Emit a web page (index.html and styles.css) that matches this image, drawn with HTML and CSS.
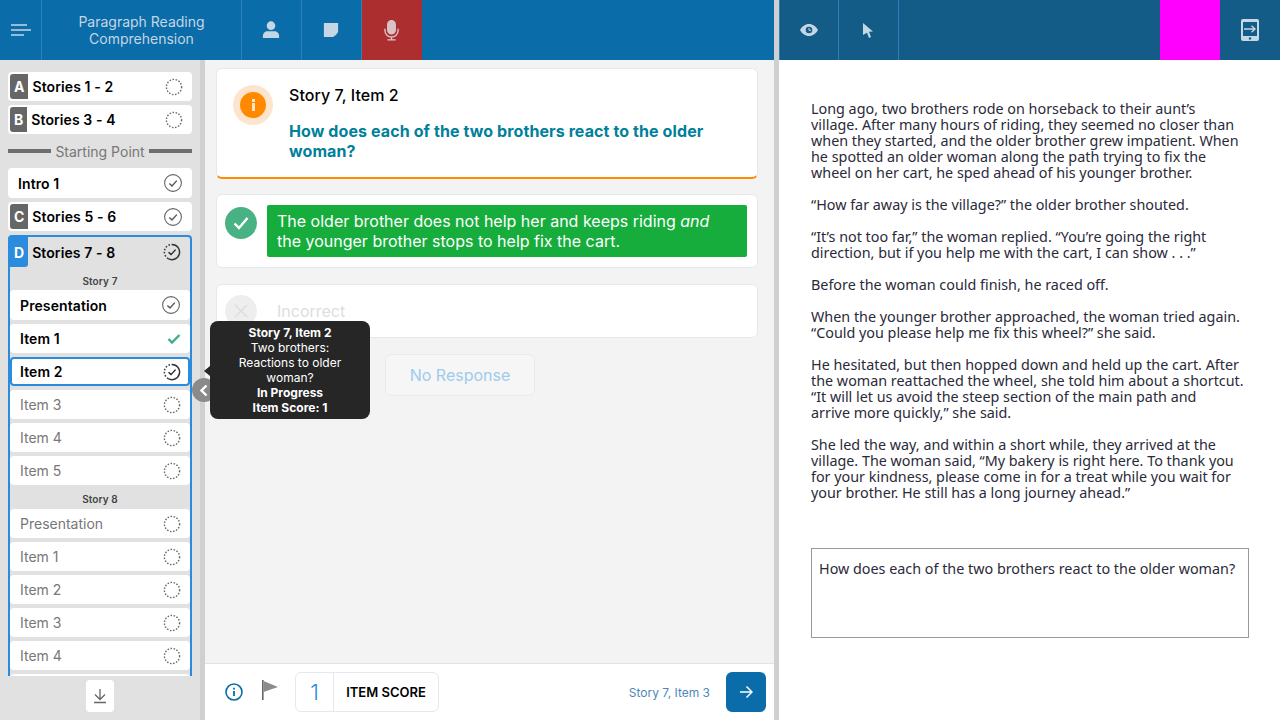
FILE: index.html
```html
<!DOCTYPE html>
<html lang="en">
  <head>
    <meta charset="UTF-8" />
    <title>Paragraph Reading Comprehension</title>
    <link rel="stylesheet" href="styles.css">
  </head>
  <body>
    <svg class="defs" width="0" height="0">
      <symbol id="todo" viewBox="0 0 20 20"><circle cx="10" cy="10" r="7.6" fill="none" stroke="#666" stroke-width="1.400" stroke-dasharray="1.500 1.600"/></symbol>
      <symbol id="done" viewBox="0 0 20 20"><circle cx="10" cy="10" r="8.400" fill="none" stroke="#666" stroke-width="1.100"/><path d="M6.400 10.400l2.600 2.600 4.800-5.400" fill="none" stroke="#555" stroke-width="1.400"/></symbol>
      <symbol id="progress" viewBox="0 0 20 20"><path d="M10 2.400A7.600 7.600 0 1 1 6.200 16.600" fill="none" stroke="#333" stroke-width="1.500"/><path d="M6.200 16.600A7.600 7.600 0 0 1 10 2.400" fill="none" stroke="#333" stroke-width="1.500" stroke-dasharray="1.500 1.700"/><path d="M6.600 10.200l2.400 2.400 4.600-5" fill="none" stroke="#222" stroke-width="1.400"/></symbol>
    </svg>

    <div class="app">
      <section class="left">
        <header class="topbar">
          <div class="cell cell-menu">
            <svg width="22" height="14" viewBox="0 0 22 14"><path d="M1 2h16M1 7h20M1 12h13" stroke="#c5d6e4" stroke-width="1.600"/></svg>
          </div>
          <div class="cell cell-title">Paragraph Reading<br>Comprehension</div>
          <div class="cell cell-icon">
            <svg width="18" height="18" viewBox="0 0 20 20" fill="#c5d6e4"><circle cx="10" cy="5.200" r="4.800"/><path d="M1 19v-2.600c0-3 2.600-5 5-5h8c2.400 0 5 2 5 5V19z"/></svg>
          </div>
          <div class="cell cell-icon">
            <svg width="16" height="16" viewBox="0 0 18 18"><path d="M1 1h16v10.500L11.500 17H1z" fill="#c5d6e4"/><path d="M13 13h3l-3 3z" fill="#c5d6e4"/></svg>
          </div>
          <div class="cell cell-icon cell-mic">
            <svg width="15" height="21" viewBox="0 0 16 22" fill="none" stroke="#d9c3c6" stroke-width="1.500"><rect x="4" y="0.500" width="8" height="14" rx="4" fill="#d9c3c6"/><path d="M1 9v2a7 7 0 0 0 14 0V9M8 18v3M3.500 21h9"/></svg>
          </div>
        </header>

        <div class="workspace">
          <aside class="sidebar">
            <div class="nav">
              <div class="row row-short"><span class="letter">A</span><b class="sec-name">Stories 1 - 2</b><svg class="st st-a"><use href="#todo"/></svg></div>
              <div class="row row-short"><span class="letter">B</span><b class="sec-name">Stories 3 - 4</b><svg class="st st-a"><use href="#todo"/></svg></div>
              <div class="divider"><i></i><span>Starting Point</span><i></i></div>
              <div class="row row-intro"><b>Intro 1</b><svg class="st"><use href="#done"/></svg></div>
              <div class="row row-short"><span class="letter">C</span><b class="sec-name">Stories 5 - 6</b><svg class="st"><use href="#done"/></svg></div>

              <div class="group">
                <div class="group-head"><span class="letter letter-on">D</span><b class="sec-name">Stories 7 - 8</b><svg class="st"><use href="#progress"/></svg></div>
                <div class="story">Story 7</div>
                <div class="row item item-first"><b>Presentation</b><svg class="st"><use href="#done"/></svg></div>
                <div class="row item"><b>Item 1</b><svg class="tick" width="14" height="12" viewBox="0 0 14 12"><path d="M1.500 6l3.500 3.500L12.500 2" fill="none" stroke="#3fb083" stroke-width="2.400"/></svg></div>
                <div class="row item item-current"><b>Item 2</b><svg class="st"><use href="#progress"/></svg></div>
                <div class="row item">Item 3<svg class="st"><use href="#todo"/></svg></div>
                <div class="row item">Item 4<svg class="st"><use href="#todo"/></svg></div>
                <div class="row item">Item 5<svg class="st"><use href="#todo"/></svg></div>
                <div class="story">Story 8</div>
                <div class="row item">Presentation<svg class="st"><use href="#todo"/></svg></div>
                <div class="row item">Item 1<svg class="st"><use href="#todo"/></svg></div>
                <div class="row item">Item 2<svg class="st"><use href="#todo"/></svg></div>
                <div class="row item">Item 3<svg class="st"><use href="#todo"/></svg></div>
                <div class="row item">Item 4<svg class="st"><use href="#todo"/></svg></div>
                <div class="row item"></div>
              </div>
            </div>
            <div class="side-foot">
              <button class="down">
                <svg width="14" height="16" viewBox="0 0 14 16" fill="none" stroke="#666" stroke-width="1.300"><path d="M7 1v10M2 6.500L7 11.500l5-5M1 14.500h12"/></svg>
              </button>
            </div>
          </aside>

          <main class="main">
            <div class="content">
              <div class="card card-question">
                <div class="info-ring"><div class="info-dot"><i></i><i></i></div></div>
                <div>
                  <h2>Story 7, Item 2</h2>
                  <p class="question">How does each of the two brothers react to the older woman?</p>
                </div>
              </div>

              <div class="card card-answer">
                <div class="round round-ok">
                  <svg width="16" height="14" viewBox="0 0 16 14"><path d="M1.500 7.500l4.500 4.500 8.500-10" fill="none" stroke="#fff" stroke-width="2.400"/></svg>
                </div>
                <div class="answer-text">The older brother does not help her and keeps riding <em>and</em> the younger brother stops to help fix the cart.</div>
              </div>

              <div class="card card-wrong">
                <div class="round round-off">
                  <svg width="14" height="14" viewBox="0 0 14 14"><path d="M1 1l12 12M13 1L1 13" stroke="#dcdcdc" stroke-width="1.400"/></svg>
                </div>
                <span class="wrong-text">Incorrect</span>
              </div>

              <button class="no-response">No Response</button>
            </div>

            <footer class="bottom">
              <svg width="18" height="18" viewBox="0 0 18 18"><circle cx="9" cy="9" r="8" fill="none" stroke="#0a6ca8" stroke-width="1.600"/><path d="M9 8v5M9 4.800v1.600" stroke="#0a6ca8" stroke-width="1.800"/></svg>
              <svg class="flag" width="16" height="20" viewBox="0 0 16 20"><path d="M0.800 0v20" stroke="#666" stroke-width="1.600"/><path d="M1.500 1L16 7 1.500 12z" fill="#8c8c8c"/></svg>
              <div class="score">
                <span class="score-num">1</span>
                <span class="score-label">ITEM SCORE</span>
              </div>
              <span class="next-label">Story 7, Item 3</span>
              <button class="next">
                <svg width="14" height="14" viewBox="0 0 14 14" fill="none" stroke="#fff" stroke-width="1.500"><path d="M1 7h12M7.500 1.500L13 7l-5.500 5.500"/></svg>
              </button>
            </footer>
          </main>
        </div>
      </section>

      <div class="splitter"></div>

      <section class="right">
        <header class="topbar topbar-dark">
          <div class="cell cell-icon cell-first">
            <svg width="18" height="12" viewBox="0 0 18 12"><path d="M0 6c2-3.600 5.200-6 9-6s7 2.400 9 6c-2 3.600-5.200 6-9 6S2 9.600 0 6z" fill="#c5d6e4"/><circle cx="9" cy="6" r="3.300" fill="#135c88"/><path d="M9 4v2.300h2" stroke="#c5d6e4" fill="none"/></svg>
          </div>
          <div class="cell cell-icon">
            <svg width="10" height="15" viewBox="0 0 10 15"><path d="M0 0l10 8.500-4 .3 2 5.200-2 1-2-5.300L0 12z" fill="#c5d6e4"/></svg>
          </div>
          <div class="spacer"></div>
          <div class="swatch"></div>
          <div class="cell cell-exit">
            <svg width="18" height="22" viewBox="0 0 18 22"><rect width="18" height="22" rx="2" fill="#c5d6e4"/><rect x="2" y="3" width="14" height="14" fill="#135c88"/><circle cx="9" cy="19.500" r="1.200" fill="#135c88"/><path d="M3 10h11M10.500 6.800L14 10l-3.500 3.200" stroke="#c5d6e4" stroke-width="1.400" fill="none"/></svg>
          </div>
        </header>

        <article class="passage">
          <p>Long ago, two brothers rode on horseback to their aunt’s<br>village. After many hours of riding, they seemed no closer than<br>when they started, and the older brother grew impatient. When<br>he spotted an older woman along the path trying to fix the<br>wheel on her cart, he sped ahead of his younger brother.</p>
          <p>“How far away is the village?” the older brother shouted.</p>
          <p>“It’s not too far,” the woman replied. “You’re going the right<br>direction, but if you help me with the cart, I can show . . .”</p>
          <p>Before the woman could finish, he raced off.</p>
          <p>When the younger brother approached, the woman tried again.<br>“Could you please help me fix this wheel?” she said.</p>
          <p>He hesitated, but then hopped down and held up the cart. After<br>the woman reattached the wheel, she told him about a shortcut.<br>“It will let us avoid the steep section of the main path and<br>arrive more quickly,” she said.</p>
          <p>She led the way, and within a short while, they arrived at the<br>village. The woman said, “My bakery is right here. To thank you<br>for your kindness, please come in for a treat while you wait for<br>your brother. He still has a long journey ahead.”</p>
          <div class="prompt">How does each of the two brothers react to the older woman?</div>
        </article>
      </section>
    </div>

    <div class="collapse">
      <svg width="9" height="13" viewBox="0 0 9 13"><path d="M7.500 1.500L2.500 6.500l5 5" fill="none" stroke="#fff" stroke-width="2.400"/></svg>
    </div>
    <div class="tooltip">
      <b>Story 7, Item 2</b><br>Two brothers:<br>Reactions to older<br>woman?<br><b>In Progress</b><br><b>Item Score: 1</b>
    </div>
  </body>
</html>
```

FILE: styles.css
```css
* {
  margin: 0;
  padding: 0;
  box-sizing: border-box;
}

body {
  width: 1280px;
  height: 720px;
  overflow: hidden;
  position: relative;
  font-family: Inter, "Liberation Sans", sans-serif;
  background-color: #fff;
}

button {
  font-family: inherit;
  background: none;
  border: none;
}

.defs {
  position: absolute;
}

.app {
  display: flex;
  height: 720px;
}

.left {
  width: 774px;
  display: flex;
  flex-direction: column;
}

.splitter {
  width: 5px;
  background-color: #d0d0d0;
}

.right {
  flex: 1;
  display: flex;
  flex-direction: column;
}

/* top bars */
.topbar {
  height: 60px;
  flex: none;
  display: flex;
  background-color: #0a6ca8;
}

.topbar-dark {
  background-color: #135c88;
}

.cell {
  display: flex;
  align-items: center;
  justify-content: center;
  border-right: 1px solid #2d81b6;
}

.cell-menu {
  width: 42px;
}

.cell-title {
  width: 200px;
  color: #c5d6e4;
  font-size: 14px;
  line-height: 17px;
  text-align: center;
}

.cell-icon {
  width: 60px;
}

.cell-icon svg {
  margin-right: 1px;
}

.cell-mic {
  background-color: #ad2e2e;
  border-right: none;
}

.cell-first {
  border-left: 1px solid #2d81b6;
}

.spacer {
  flex: 1;
}

.swatch {
  width: 60px;
  background-color: #ff00ff;
}

.cell-exit {
  width: 60px;
  border: none;
}

.workspace {
  flex: 1;
  min-height: 0;
  display: flex;
}

/* section list */
.sidebar {
  width: 205px;
  flex: none;
  display: flex;
  flex-direction: column;
  background-color: #e1e1e1;
  border-right: 5px solid #d0d0d0;
}

.nav {
  height: 616px;
  overflow: hidden;
  padding: 12px 8px 0;
}

.row {
  height: 29px;
  display: flex;
  align-items: center;
  justify-content: space-between;
  margin-bottom: 4px;
  padding-right: 9px;
  background-color: #fff;
  border-radius: 4px;
  font-size: 14px;
  color: #000;
}

.row b,
.group-head b {
  font-weight: 600;
  letter-spacing: 0.1px;
}

.row-intro {
  height: 30px;
  padding-left: 10px;
}

.letter {
  height: 25px;
  flex: none;
  margin-left: 2px;
  padding: 0 4px;
  display: flex;
  align-items: center;
  justify-content: center;
  background-color: #666;
  color: #fff;
  font-size: 14px;
  font-weight: 700;
  border-radius: 3px 0 0 3px;
}

.sec-name {
  flex: 1;
  margin-left: 4px;
}

.st {
  width: 20px;
  height: 20px;
  flex: none;
}

.st-a {
  margin-right: -1px;
}

.tick {
  margin-right: 1px;
}

.divider {
  height: 30px;
  display: flex;
  align-items: center;
  gap: 4px;
  padding-bottom: 4px;
  color: #777;
  font-size: 14px;
}

.divider i {
  flex: 1;
  height: 4px;
  background-color: #6e6e6e;
}

.group {
  border: 2px solid #2b8bdc;
  border-radius: 4px;
  padding-bottom: 4px;
}

.group-head {
  height: 30px;
  display: flex;
  align-items: center;
  padding-right: 8px;
  font-size: 14px;
  color: #000;
}

.group-head .letter {
  height: 30px;
  margin-left: 0;
  border-radius: 0 0 3px 0;
}

.letter-on {
  background-color: #2b8bdc;
}

.story {
  height: 23px;
  display: flex;
  align-items: flex-end;
  justify-content: center;
  padding-bottom: 3px;
  font-size: 10px;
  font-weight: 600;
  letter-spacing: 0.1px;
  color: #444;
}

.item {
  padding-left: 10px;
  padding-right: 8px;
  color: #777;
}

.item + .story {
  height: 20px;
  margin-top: -1px;
  margin-bottom: 1px;
}

.item b {
  color: #000;
}

.item-first {
  height: 30px;
  padding-right: 9px;
}

.item-current {
  border: 2px solid #2b8bdc;
  padding-left: 8px;
  padding-right: 6px;
}

.side-foot {
  flex: 1;
  display: flex;
  justify-content: center;
  padding-top: 4px;
}

.down {
  width: 28px;
  height: 32px;
  display: flex;
  align-items: center;
  justify-content: center;
  background-color: #fff;
  border-radius: 4px;
}

/* middle column */
.main {
  flex: 1;
  min-width: 0;
  display: flex;
  flex-direction: column;
  background-color: #f3f3f3;
}

.content {
  flex: 1;
  padding: 8px 16px 0 11px;
}

.card {
  background-color: #fff;
  border: 1px solid #e5e8f0;
  border-radius: 6px;
}

.card-question {
  height: 111px;
  display: flex;
  padding: 16px 16px 0;
  border-bottom: 2px solid #ff8a00;
}

.info-ring {
  width: 40px;
  height: 40px;
  flex: none;
  display: flex;
  align-items: center;
  justify-content: center;
  margin-right: 16px;
  background-color: #fde5cd;
  border-radius: 50%;
}

.info-dot {
  width: 26px;
  height: 26px;
  display: flex;
  flex-direction: column;
  align-items: center;
  justify-content: center;
  gap: 1.500px;
  background-color: #ff8a00;
  border-radius: 50%;
}

.info-dot i {
  width: 3px;
  height: 8px;
  background-color: #fde5cd;
}

.info-dot i:first-child {
  height: 3px;
}

h2 {
  font-size: 16px;
  font-weight: 500;
  line-height: 20px;
  letter-spacing: 0.05px;
  color: #000;
}

.question {
  margin-top: 16px;
  font-size: 16px;
  font-weight: 700;
  line-height: 20px;
  letter-spacing: 0.1px;
  color: #00809a;
}

.card-answer {
  height: 74px;
  margin-top: 15px;
  display: flex;
  padding: 10px 10px 0 8px;
}

.round {
  width: 32px;
  height: 32px;
  flex: none;
  display: flex;
  align-items: center;
  justify-content: center;
  margin-right: 10px;
  border-radius: 50%;
}

.round-ok {
  margin-top: 2px;
  background-color: #49b284;
}

.round-off {
  background-color: #eee;
}

.answer-text {
  width: 480px;
  height: 52px;
  padding: 6px 10px;
  background-color: #16ad3d;
  border-radius: 2px;
  color: #fff;
  font-size: 16px;
  line-height: 20px;
}

.card-wrong {
  height: 54px;
  margin-top: 16px;
  display: flex;
  align-items: center;
  padding: 0 8px;
  color: #ddd;
  font-size: 16px;
}

.wrong-text {
  margin-left: 10px;
}

.no-response {
  display: block;
  width: 150px;
  height: 42px;
  margin: 16px 0 0 169px;
  background-color: #f6f6f6;
  border: 1px solid #e9e9ef;
  border-radius: 6px;
  color: #a0cbea;
  font-size: 16px;
}

.bottom {
  height: 57px;
  flex: none;
  display: flex;
  align-items: center;
  padding: 0 8px 0 20px;
  background-color: #fff;
  border-top: 1px solid #e2e2e2;
}

.flag {
  margin: -5px 0 0 19px;
}

.score {
  height: 40px;
  display: flex;
  margin-left: 17px;
  border: 1px solid #e5e8f0;
  border-radius: 6px;
}

.score-num {
  width: 38px;
  display: flex;
  align-items: center;
  justify-content: center;
  border-right: 1px solid #e5e8f0;
  color: #2b8bdc;
  font-size: 22px;
  font-weight: 300;
}

.score-label {
  width: 104px;
  display: flex;
  align-items: center;
  justify-content: center;
  font-size: 13px;
  font-weight: 600;
  color: #000;
}

.next-label {
  margin-left: auto;
  margin-right: 16px;
  color: #4d88b8;
  font-size: 12px;
}

.next {
  width: 40px;
  height: 40px;
  display: flex;
  align-items: center;
  justify-content: center;
  background-color: #0a6ca8;
  border-radius: 6px;
}

/* passage */
.passage {
  flex: 1;
  padding: 41px 31px 0 32px;
  font-family: "Noto Sans", sans-serif;
  font-size: 14.350px;
  line-height: 16px;
  color: #2a2a3a;
}

.passage p {
  margin-bottom: 16px;
}

.passage p:last-of-type {
  margin-bottom: 47px;
}

.prompt {
  height: 90px;
  padding: 12px 7px;
  border: 1.500px solid #999;
}

/* over the columns */
.collapse {
  position: absolute;
  left: 192px;
  top: 378px;
  width: 24px;
  height: 24px;
  display: flex;
  align-items: center;
  padding-left: 7px;
  background-color: #8a8a8a;
  border-radius: 50%;
}

.tooltip {
  position: absolute;
  left: 210px;
  top: 321px;
  width: 160px;
  height: 98px;
  padding: 4px 8px;
  background-color: #262626;
  border-radius: 8px;
  color: #fff;
  font-size: 12px;
  line-height: 15px;
  text-align: center;
}

.tooltip::before {
  content: "";
  position: absolute;
  left: -6px;
  top: 45px;
  border-style: solid;
  border-width: 5px 6px 5px 0;
  border-color: transparent #262626 transparent transparent;
}
```
